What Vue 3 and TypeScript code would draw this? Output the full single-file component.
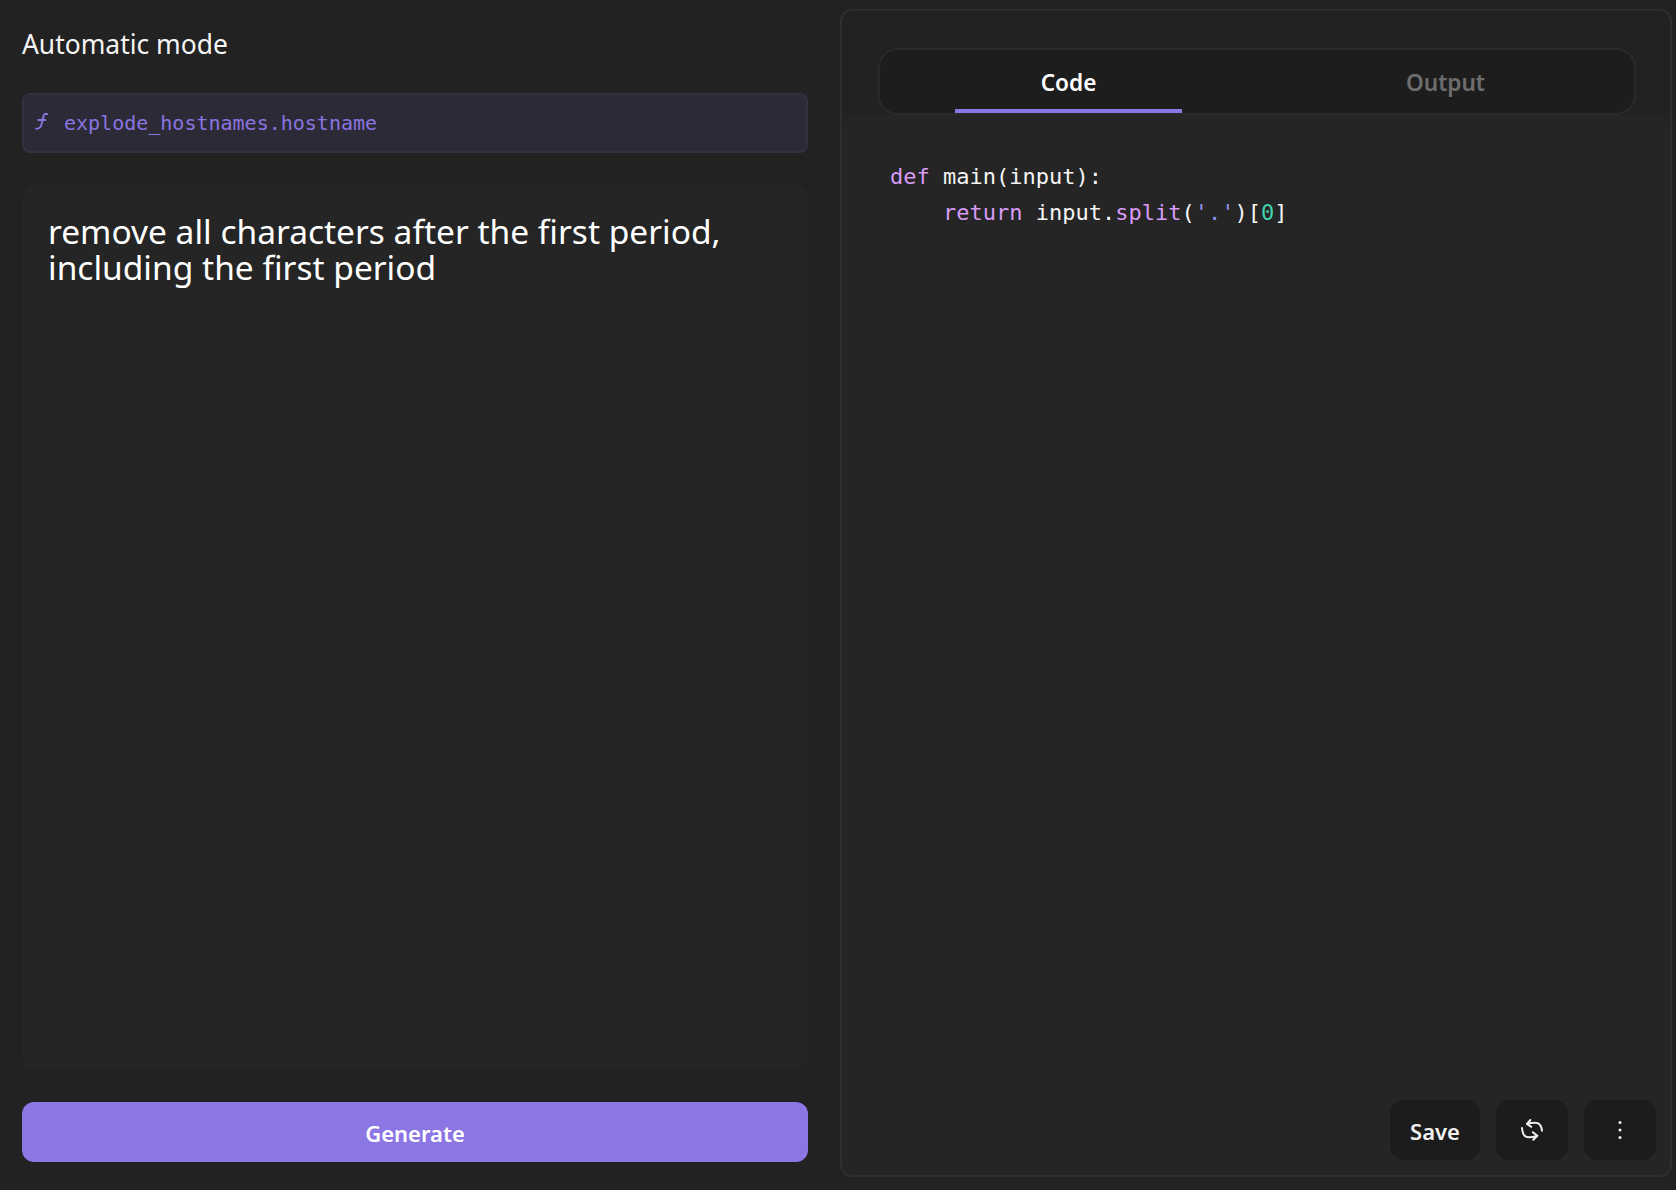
<script setup lang="ts">
const tabs: { label: string; active: boolean }[] = [
  { label: 'Code', active: true },
  { label: 'Output', active: false },
]
</script>

<template>
  <div class="page">
    <section class="left">
      <h1 class="title">Automatic mode</h1>
      <div class="field">
        <svg class="fn" width="14" height="18" viewBox="0 0 14 18" fill="none" stroke="currentColor" stroke-width="1.9" stroke-linecap="round" stroke-linejoin="round">
          <path d="M12.4 2H10.6C9.5 2 8.9 2.6 8.6 3.7L6.2 13.4C5.8 15.4 4.4 16.7 1.2 16.7" />
          <path d="M3.2 8H10.3" />
        </svg>
        <span class="field-text">explode_hostnames.hostname</span>
      </div>
      <div class="prompt">remove all characters after the first period, including the first period</div>
      <button class="generate">Generate</button>
    </section>
    <section class="right">
      <div class="tabs">
        <div v-for="t in tabs" :key="t.label" class="tab" :class="{ active: t.active }">{{ t.label }}</div>
      </div>
      <div class="editor">
        <div class="code">
          <div class="line"><span class="kw">def</span><span> main(input):</span></div>
          <div class="line indent"><span class="kw">return</span><span> input.</span><span class="kw">split</span><span>(</span><span class="str">'.'</span><span>)[</span><span class="num">0</span><span>]</span></div>
        </div>
        <div class="actions">
          <button class="btn save">Save</button>
          <button class="btn icon" aria-label="Regenerate">
            <svg width="32" height="32" viewBox="0 0 32 32" fill="none" stroke="currentColor" stroke-width="2" stroke-linecap="round" stroke-linejoin="round">
              <path d="M11 10C16 8.6 19.4 8.2 21.7 9.2C24.2 10.4 25.6 13.2 26 16.7" />
              <path d="M14.4 6L11 10L15.3 12.8" />
              <path d="M6 14C6.3 17.8 7.2 20.8 9.4 22.4C12 24 17 23.2 21.3 21.7" />
              <path d="M16.8 18.2L21.3 21.7L17.3 25.7" />
            </svg>
          </button>
          <button class="btn icon" aria-label="More">
            <svg width="6" height="20" viewBox="0 0 6 20" fill="currentColor">
              <circle cx="3" cy="2.5" r="1.5" />
              <circle cx="3" cy="10" r="1.5" />
              <circle cx="3" cy="17.5" r="1.5" />
            </svg>
          </button>
        </div>
      </div>
    </section>
  </div>
</template>

<style>
html, body { margin: 0; background: #222222; }
</style>

<style scoped>
.page {
  box-sizing: border-box;
  width: 1676px;
  height: 1190px;
  display: flex;
  background: #222222;
  color: #fff;
  font-family: "Noto Sans", "Open Sans", sans-serif;
  overflow: hidden;
}
.left {
  width: 786px;
  margin-left: 22px;
  display: flex;
  flex-direction: column;
  height: 1162px;
}
.title {
  margin: 26px 0 0;
  height: 36px;
  font-size: 26.4px;
  line-height: 36px;
  font-weight: 400;
  color: #f4f4f4;
}
.field {
  box-sizing: border-box;
  margin-top: 31px;
  height: 60px;
  display: flex;
  align-items: center;
  padding: 0 0 0 11px;
  background: #2c2a36;
  border: 2px solid #33313f;
  border-radius: 8px;
  color: #8b74e0;
}
.fn { flex: none; margin-top: -4px; }
.field-text {
  margin-left: 15px;
  font-family: "DejaVu Sans Mono", monospace;
  font-size: 20px;
}
.prompt {
  box-sizing: border-box;
  margin-top: 32px;
  flex: 1;
  padding: 28px 26px;
  background: #252525;
  border-radius: 14px;
  font-size: 33.5px;
  line-height: 36px;
  color: #fff;
}
.generate {
  margin-top: 32px;
  height: 60px;
  padding: 2px 0 0;
  border: 0;
  border-radius: 12px;
  background: #8c76e3;
  color: #fff;
  font-family: inherit;
  font-size: 22px;
  font-weight: 600;
}
.right {
  box-sizing: border-box;
  width: 832px;
  height: 1168px;
  margin: 9px 0 0 32px;
  border: 2px solid #2e2e2e;
  border-radius: 12px;
  display: flex;
  flex-direction: column;
}
.tabs {
  box-sizing: border-box;
  margin: 37px 0 0 36px;
  width: 758px;
  height: 67px;
  display: flex;
  background: #1d1d1d;
  border: 2px solid #2a2a2a;
  border-radius: 20px;
}
.tab {
  flex: 1;
  position: relative;
  display: flex;
  align-items: center;
  justify-content: center;
  padding-top: 2px;
  font-size: 22.6px;
  font-weight: 600;
  color: #6d6d6d;
}
.tab.active { color: #fff; }
.tab.active::after {
  content: "";
  position: absolute;
  left: 20%;
  right: 20%;
  bottom: 0;
  height: 4px;
  background: #8c76e3;
}
.editor {
  flex: 1;
  display: flex;
  flex-direction: column;
  background: #252525;
  border-radius: 12px 12px 10px 10px;
}
.code {
  margin: 44px 0 0 48px;
  font-family: "DejaVu Sans Mono", monospace;
  font-size: 22px;
  line-height: 36px;
  color: #f4f4f4;
}
.line { white-space: pre; }
.indent { padding-left: 53px; }
.kw { color: #d79bf5; }
.str { color: #8d8fe6; }
.num { color: #3fd3ae; }
.actions {
  margin: auto 14px 15px 0;
  display: flex;
  justify-content: flex-end;
  gap: 16px;
}
.btn {
  height: 60px;
  border: 0;
  border-radius: 14px;
  background: #1c1c1c;
  color: #f0f0f0;
  font-family: inherit;
  display: flex;
  align-items: center;
  justify-content: center;
  padding: 0;
}
.save { width: 90px; padding-top: 2px; font-size: 22px; font-weight: 600; }
.icon { width: 72px; }
</style>
